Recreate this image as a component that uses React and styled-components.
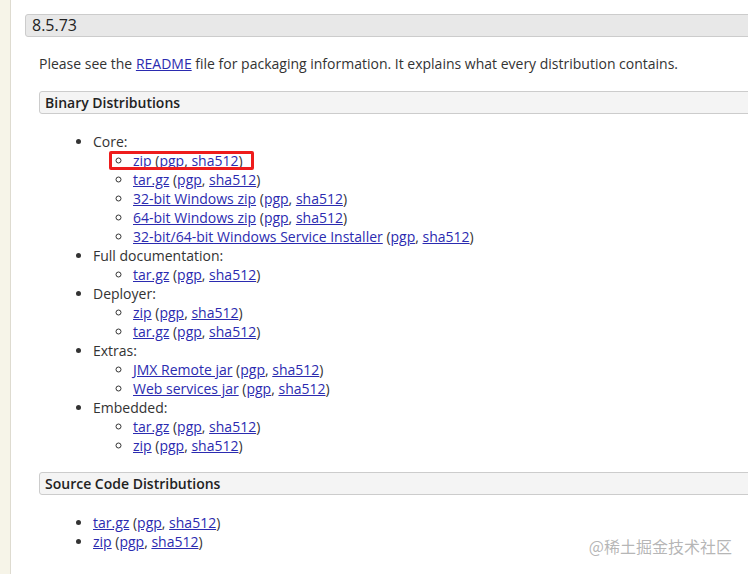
import styled, { createGlobalStyle } from 'styled-components';

const GlobalStyle = createGlobalStyle`
  html, body {
    margin: 0;
    padding: 0;
    background: #ffffff;
  }
  body {
    font-family: 'Open Sans', 'Liberation Sans', sans-serif;
    color: #333333;
    font-size: 14px;
  }
`;

const core = [
  { label: 'zip', highlight: true },
  { label: 'tar.gz' },
  { label: '32-bit Windows zip' },
  { label: '64-bit Windows zip' },
  { label: '32-bit/64-bit Windows Service Installer' },
];

const groups = [
  { name: 'Core:', items: core },
  { name: 'Full documentation:', items: [{ label: 'tar.gz' }] },
  { name: 'Deployer:', items: [{ label: 'zip' }, { label: 'tar.gz' }] },
  { name: 'Extras:', items: [{ label: 'JMX Remote jar' }, { label: 'Web services jar' }] },
  { name: 'Embedded:', items: [{ label: 'tar.gz' }, { label: 'zip' }] },
];

function Download({ label }) {
  return (
    <>
      <Link href="#">{label}</Link> (<Link href="#">pgp</Link>, <Link href="#">sha512</Link>)
    </>
  );
}

function App() {
  return (
    <Page>
      <GlobalStyle />
      <Sidebar />
      <Main>
        <VersionTitle>8.5.73</VersionTitle>
        <SectionBody>
          <Intro>
            Please see the <Link href="#">README</Link> file for packaging information. It explains what every
            distribution contains.
          </Intro>

          <SubTitle>Binary Distributions</SubTitle>
          <List>
            {groups.map(group => (
              <li key={group.name}>
                {group.name}
                <SubList>
                  {group.items.map((item, i) => (
                    <Item key={i} $highlight={item.highlight}>
                      <Download label={item.label} />
                    </Item>
                  ))}
                </SubList>
              </li>
            ))}
          </List>

          <SubTitle>Source Code Distributions</SubTitle>
          <List>
            <li>
              <Download label="tar.gz" />
            </li>
            <li>
              <Download label="zip" />
            </li>
          </List>
        </SectionBody>
      </Main>
      <Watermark>@稀土掘金技术社区</Watermark>
    </Page>
  );
}

export default App;

const Page = styled.div`
  position: relative;
  display: flex;
  height: 100vh;
  overflow: hidden;
`;

const Sidebar = styled.div`
  flex: 0 0 10px;
  background: #f6f4e8;
  border-right: 1px solid #dedbd0;
`;

const Main = styled.main`
  flex: 1;
  padding: 14px 0 0 14px;
  min-width: 0;
`;

const VersionTitle = styled.h3`
  margin: 0 -20px 0 0;
  height: 21px;
  line-height: 21px;
  padding: 0 0 0 6px;
  font-size: 16px;
  font-weight: 400;
  color: #222222;
  background: #e8e8e8;
  border: 1px solid #cccccc;
  border-radius: 3px;
`;

const SectionBody = styled.div`
  padding-left: 14px;
`;

const Intro = styled.p`
  margin: 17px 0 18px;
  line-height: 19px;
`;

const SubTitle = styled.h4`
  margin: 0 -20px 0 0;
  height: 21px;
  line-height: 21px;
  padding-left: 5px;
  font-size: 14px;
  font-weight: 600;
  color: #222222;
  background: #f4f4f4;
  border: 1px solid #cccccc;
  border-radius: 3px;
`;

const List = styled.ul`
  margin: 18px 0 17px;
  padding-left: 54px;
  line-height: 19px;
  list-style: disc;
`;

const SubList = styled.ul`
  margin: 0;
  padding-left: 40px;
  list-style: circle;
`;

const Item = styled.li`
  position: relative;

  &::after {
    content: '';
    display: ${p => (p.$highlight ? 'block' : 'none')};
    position: absolute;
    left: -24px;
    top: 0;
    width: 139px;
    height: 13px;
    border: 3px solid #ee1c1c;
    border-radius: 2px;
    pointer-events: none;
  }
`;

const Link = styled.a`
  color: #2b2bb0;
  text-decoration: underline;
`;

const Watermark = styled.div`
  position: absolute;
  right: 16px;
  bottom: 16px;
  font-family: 'Noto Sans CJK SC', sans-serif;
  font-size: 16px;
  color: rgba(150, 150, 150, 0.7);
`;
